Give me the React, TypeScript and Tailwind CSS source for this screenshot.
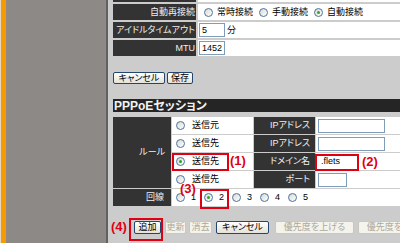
const FONT = "font-['Liberation_Sans','Noto_Sans_CJK_JP',sans-serif] [font-feature-settings:'palt']";

function Radio({ checked }: { checked?: boolean }) {
  return (
    <span className="flex h-[9px] w-[9px] shrink-0 items-center justify-center rounded-full border border-[#4d73a0] bg-gradient-to-br from-[#d8d8d2] to-white">
      {checked && <span className="h-[3px] w-[3px] rounded-full bg-[#27a827]" />}
    </span>
  );
}

function Label({ children, className = '' }: { children: React.ReactNode; className?: string }) {
  return (
    <div className={`flex items-center justify-end bg-[#333333] text-[#f0f0f0] ${className}`}>
      {children}
    </div>
  );
}

function Input({ value = '', className = '' }: { value?: string; className?: string }) {
  return (
    <div className={`flex items-center border border-[#7f9db9] bg-white pl-[2px] text-black ${className}`}>
      {value}
    </div>
  );
}

function Btn({
  children,
  className = '',
  disabled,
}: {
  children: React.ReactNode;
  className?: string;
  disabled?: boolean;
}) {
  return (
    <button
      type="button"
      disabled={disabled}
      className={
        disabled
          ? `flex shrink-0 items-center justify-center overflow-hidden rounded-[2px] border border-[#cac8bb] bg-[#f4f3ec] text-[#aca899] ${className}`
          : `flex shrink-0 items-center justify-center rounded-[2px] border border-[#24466e] bg-gradient-to-b from-white to-[#e4e2d8] text-black ${className}`
      }
    >
      {children}
    </button>
  );
}

export default function App() {
  return (
    <div className={`relative flex h-[243px] w-[400px] overflow-hidden bg-[#cccccc] text-[9px] leading-none ${FONT}`}>
      <div className="w-px shrink-0 bg-[#e6d9c4]" />
      <div className="w-[5px] shrink-0 bg-[#f59a00]" />
      <div className="w-[100px] shrink-0 bg-[#8d8987]" />
      <div className="w-[2px] shrink-0 bg-[#626060]" />

      <div className="flex w-[330px] shrink-0 flex-col pl-[5px]">
        {/* 接続設定 */}
        <div className="mt-[-14px] grid grid-cols-[83px_1fr] gap-[2px]">
          <Label className="h-[16px]">{''}</Label>
          <div className="bg-white" />

          <Label className="h-[16px] pr-[1px]">自動再接続</Label>
          <div className="flex items-center bg-white pl-[6px] text-black">
            <Radio />
            <span className="ml-[4px]">常時接続</span>
            <span className="ml-[6px]"><Radio /></span>
            <span className="ml-[4px]">手動接続</span>
            <span className="ml-[6px]"><Radio checked /></span>
            <span className="ml-[4px]">自動接続</span>
          </div>

          <Label className="h-[16px] pr-[1px]">アイドルタイムアウト</Label>
          <div className="flex items-center bg-white pl-px text-black">
            <Input value="5" className="h-[14px] w-[26px]" />
            <span className="ml-[2px]">分</span>
          </div>

          <Label className="h-[16px] pr-[1px]">MTU</Label>
          <div className="flex items-center bg-white pl-px">
            <Input value="1452" className="h-[14px] w-[26px]" />
          </div>
        </div>

        <div className="mt-[16px] flex gap-[2px]">
          <Btn className="h-[12px] w-[52px]">キャンセル</Btn>
          <Btn className="h-[12px] w-[26px]">保存</Btn>
        </div>

        <div className="mt-[15px] flex h-[13px] items-center bg-[#252525] pl-px text-[12px] font-bold text-[#f2f2f2]">
          PPPoEセッション
        </div>

        {/* セッションルール */}
        <div className="mt-[5px] grid grid-cols-[58px_81px_61px_1fr] grid-rows-[17px_17px_17px_17px_17px] gap-px">
          <Label className="row-span-4 pr-[6px]">ルール</Label>

          <div className="flex items-center bg-white pl-[4px] text-black">
            <Radio />
            <span className="ml-[7px]">送信元</span>
          </div>
          <Label className="pr-[5px]">IPアドレス</Label>
          <div className="flex items-center bg-white pl-[2px]">
            <Input className="h-[14px] w-[67px]" />
          </div>

          <div className="flex items-center bg-white pl-[4px] text-black">
            <Radio />
            <span className="ml-[7px]">送信先</span>
          </div>
          <Label className="pr-[5px]">IPアドレス</Label>
          <div className="flex items-center bg-white pl-[2px]">
            <Input className="h-[14px] w-[67px]" />
          </div>

          <div className="flex items-center bg-white pl-[4px] text-black">
            <Radio checked />
            <span className="ml-[7px]">送信先</span>
          </div>
          <Label className="pr-[5px]">ドメイン名</Label>
          <div className="flex items-center bg-white pl-[2px]">
            <Input value=".flets" className="h-[14px] w-[40px] border-white" />
          </div>

          <div className="flex items-center bg-white pl-[4px] text-black">
            <Radio />
            <span className="ml-[7px]">送信先</span>
          </div>
          <Label className="pr-[5px]">ポート</Label>
          <div className="flex items-center bg-white pl-[2px]">
            <Input className="h-[14px] w-[29px]" />
          </div>

          <Label className="pr-[7px]">回線</Label>
          <div className="col-span-3 flex items-center bg-white pl-[4px] text-black">
            {['1', '2', '3', '4', '5'].map((n) => (
              <span key={n} className="mr-[8px] flex items-center">
                <Radio checked={n === '2'} />
                <span className="ml-[6px]">{n}</span>
              </span>
            ))}
          </div>
        </div>

        <div className="mt-[15px] flex h-[13px] whitespace-nowrap pl-[21px]">
          <Btn className="h-[13px] w-[27px]">追加</Btn>
          <Btn disabled className="ml-[4px] h-[13px] w-[21px]">更新</Btn>
          <Btn disabled className="ml-[3px] h-[13px] w-[23px]">消去</Btn>
          <Btn className="ml-[4px] h-[13px] w-[53px]">キャンセル</Btn>
          <Btn disabled className="ml-[6px] h-[13px] w-[79px]">優先度を上げる</Btn>
          <Btn disabled className="ml-[4px] h-[13px] w-[79px]">優先度を下げる</Btn>
        </div>
      </div>

      {/* 注釈 */}
      <div className="absolute left-[172px] top-[153px] h-[18px] w-[57px] border-2 border-[#e00012]" />
      <span className="absolute left-[230px] top-[154px] text-[13px] font-bold text-[#e00012]">(1)</span>
      <div className="absolute left-[315px] top-[154px] h-[17px] w-[44px] border-2 border-[#e00012]" />
      <span className="absolute left-[362px] top-[155px] text-[13px] font-bold text-[#e00012]">(2)</span>
      <span className="absolute left-[180px] top-[182px] text-[13px] font-bold text-[#e00012]">(3)</span>
      <div className="absolute left-[200px] top-[189px] h-[20px] w-[29px] border-2 border-[#e00012]" />
      <span className="absolute left-[111px] top-[220px] text-[13px] font-bold text-[#e00012]">(4)</span>
      <div className="absolute left-[129px] top-[218px] h-[23px] w-[34px] border-2 border-[#e00012]" />
    </div>
  );
}
